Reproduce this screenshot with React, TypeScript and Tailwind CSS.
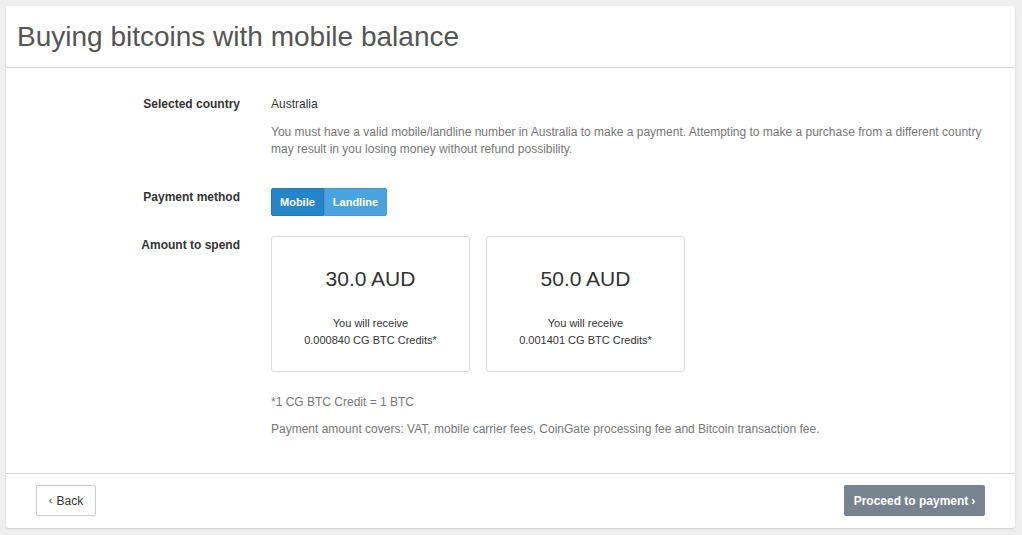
import React from "react";

export default function App() {
  const cards = [
    { amount: "30.0 AUD", credits: "0.000840 CG BTC Credits*" },
    { amount: "50.0 AUD", credits: "0.001401 CG BTC Credits*" },
  ];
  return (
    <div
      className="w-[1022px] h-[535px] bg-[#efefef] pt-[6px] pl-[6px] overflow-hidden"
      style={{ fontFamily: '"Liberation Sans", Arial, sans-serif' }}
    >
      <div className="w-[1009px] h-[522px] bg-white rounded-[3px] shadow-[0_1px_2px_rgba(0,0,0,0.15)] flex flex-col">
        <div className="h-[62px] flex items-center pl-[11px] border-b border-[#d3d3d8]">
          <h1 className="text-[28px] leading-[34px] text-[#555] pt-[1px]">Buying bitcoins with mobile balance</h1>
        </div>
        <div className="h-[406px] border-b border-[#d3d3d8] pt-[28px] text-[12px] leading-[17px] text-[#333]">
          <div className="flex items-start">
            <div className="w-[234px] text-right font-bold">Selected country</div>
            <div className="ml-[31px] flex-1 pr-[22px]">
              <div>Australia</div>
              <p className="mt-[11px] text-[#777]">
                You must have a valid mobile/landline number in Australia to make a payment. Attempting to make a purchase from a different country may result in you losing money without refund possibility.
              </p>
            </div>
          </div>
          <div className="flex items-start mt-[30px]">
            <div className="w-[234px] text-right font-bold pt-[1px]">Payment method</div>
            <div className="ml-[31px] flex">
              <div className="h-[28px] px-[8px] flex items-center bg-[#2585c9] text-white font-bold text-[11px] rounded-l-[2px] border border-[#2178b6]">
                Mobile
              </div>
              <div className="h-[28px] px-[8px] flex items-center bg-[#4aa3df] text-white font-bold text-[11px] rounded-r-[2px] border border-[#4499d4]">
                Landline
              </div>
            </div>
          </div>
          <div className="flex items-start mt-[20px]">
            <div className="w-[234px] text-right font-bold pt-[1px]">Amount to spend</div>
            <div className="ml-[31px] flex-1">
              <div className="flex gap-[16px]">
                {cards.map((c) => (
                  <div
                    key={c.amount}
                    className="w-[199px] h-[136px] border border-[#dcdcdc] rounded-[3px] flex flex-col items-center pt-[30px] text-[#333]"
                  >
                    <div className="text-[21px] leading-[24px]">{c.amount}</div>
                    <div className="mt-[24px] text-[11px] leading-[17px] text-center">
                      <div>You will receive</div>
                      <div>{c.credits}</div>
                    </div>
                  </div>
                ))}
              </div>
              <div className="mt-[22px] text-[#777]">*1 CG BTC Credit = 1 BTC</div>
              <div className="mt-[10px] text-[#777]">
                Payment amount covers: VAT, mobile carrier fees, CoinGate processing fee and Bitcoin transaction fee.
              </div>
            </div>
          </div>
        </div>
        <div className="flex-1 flex items-start justify-between px-[30px] pt-[11px]">
          <button className="h-[31px] w-[60px] border border-[#ccc] rounded-[2px] bg-white text-[12px] text-[#333] flex items-center justify-center">
            <span className="mr-[4px] text-[11px]">‹</span>Back
          </button>
          <button className="h-[31px] w-[141px] rounded-[2px] bg-[#77838f] text-white text-[12px] font-bold flex items-center justify-center">
            Proceed to payment<span className="ml-[3px]">›</span>
          </button>
        </div>
      </div>
    </div>
  );
}
